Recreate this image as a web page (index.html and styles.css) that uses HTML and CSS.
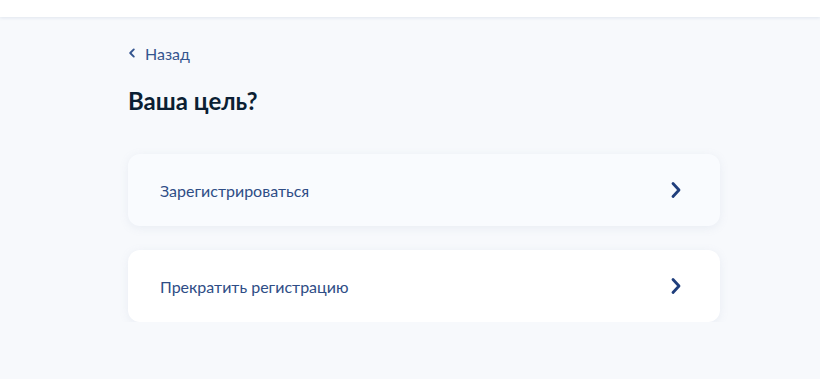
FILE: index.html
```html
<!DOCTYPE html>
<html lang="ru">
  <head>
    <meta charset="UTF-8" />
    <meta name="viewport" content="width=device-width, initial-scale=1.0" />
    <title>Ваша цель?</title>
    <link rel="stylesheet" href="styles.css">
  </head>
  <body>
    <header class="header"></header>
    <main class="page">
      <a class="back" href="#">
        <svg class="back-icon" viewBox="0 0 10 10" fill="none" stroke="currentColor" stroke-width="1.6" stroke-linecap="round" stroke-linejoin="round">
          <path d="M6.5 2 L3.5 5 L6.5 8" />
        </svg>
        <span>Назад</span>
      </a>
      <h1 class="title">Ваша цель?</h1>
      <div class="options">
        <a class="option option-hover" href="#">
          <span>Зарегистрироваться</span>
          <svg class="option-icon" viewBox="0 0 24 24" fill="none" stroke="currentColor" stroke-width="2.8" stroke-linecap="round" stroke-linejoin="round">
            <path d="M9 5.5 L15 12 L9 18.5" />
          </svg>
        </a>
        <a class="option" href="#">
          <span>Прекратить регистрацию</span>
          <svg class="option-icon" viewBox="0 0 24 24" fill="none" stroke="currentColor" stroke-width="2.8" stroke-linecap="round" stroke-linejoin="round">
            <path d="M9 5.5 L15 12 L9 18.5" />
          </svg>
        </a>
      </div>
    </main>
  </body>
</html>
```

FILE: styles.css
```css
body {
  margin: 0;
  padding: 0;
  font-family: Lato, "Noto Sans", sans-serif;
  background-color: #f7f9fc;
  color: #0b1f33;
}

.header {
  height: 17px;
  background-color: #ffffff;
  box-shadow: 0 1px 3px rgba(160, 175, 200, 0.25);
}

.page {
  width: 592px;
  margin-left: 128px;
  padding-top: 27px;
}

.back {
  display: flex;
  align-items: center;
  gap: 7px;
  height: 18px;
  font-size: 16px;
  color: #34558f;
  text-decoration: none;
}

.back-icon {
  width: 12px;
  height: 12px;
  margin-left: -2px;
}

.title {
  margin: 24px 0 0;
  font-size: 24px;
  line-height: 30px;
  font-weight: 700;
  color: #0b1f33;
}

.options {
  display: flex;
  flex-direction: column;
  gap: 24px;
  margin-top: 38px;
}

.option {
  display: flex;
  align-items: center;
  justify-content: space-between;
  height: 72px;
  padding: 0 32px;
  background-color: #ffffff;
  border-radius: 12px;
  box-shadow: 0 2px 10px rgba(130, 150, 185, 0.12);
  font-size: 16px;
  color: #2e4d86;
  text-decoration: none;
}

.option-hover {
  background-color: #f9fbfe;
}

.option-icon {
  width: 24px;
  height: 24px;
  color: #1f3e7c;
}
```
